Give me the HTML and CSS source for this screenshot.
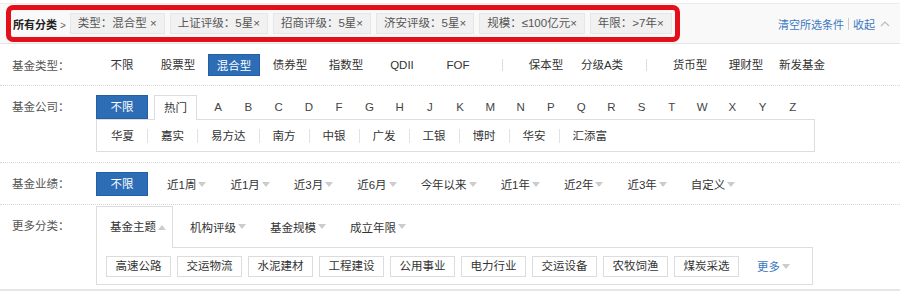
FILE: index.html
```html
<!DOCTYPE html>
<html lang="zh-CN">
<head>
    <meta charset="UTF-8">
    <title>基金筛选</title>
    <link rel="stylesheet" href="styles.css">
</head>
<body>
    <div class="crumbs">
        <div class="picked">
            <span class="all">所有分类<em>&gt;</em></span>
            <span class="tag">类型：混合型 ×</span>
            <span class="tag">上证评级：5星×</span>
            <span class="tag">招商评级：5星×</span>
            <span class="tag">济安评级：5星×</span>
            <span class="tag">规模：≤100亿元×</span>
            <span class="tag">年限：&gt;7年×</span>
        </div>
        <div class="ops">
            <a class="link">清空所选条件</a>
            <span class="vbar"></span>
            <a class="link">收起</a>
            <svg class="up" width="10" height="7" viewBox="0 0 10 7"><path d="M1 6 L5 2 L9 6" fill="none" stroke="#bbb" stroke-width="1.2"/></svg>
        </div>
    </div>

    <div class="row row-type">
        <div class="label">基金类型：</div>
        <div class="opts">
            <span class="opt">不限</span>
            <span class="opt">股票型</span>
            <span class="opt on">混合型</span>
            <span class="opt">债券型</span>
            <span class="opt">指数型</span>
            <span class="opt">QDII</span>
            <span class="opt">FOF</span>
            <span class="sep"></span>
            <span class="opt">保本型</span>
            <span class="opt">分级A类</span>
            <span class="sep"></span>
            <span class="opt">货币型</span>
            <span class="opt">理财型</span>
            <span class="opt">新发基金</span>
        </div>
    </div>

    <div class="row row-company">
        <div class="label">基金公司：</div>
        <div class="body">
            <div class="tabs">
                <span class="btn-on">不限</span>
                <span class="tab active">热门</span>
                <span class="letter">A</span>
                <span class="letter">B</span>
                <span class="letter">C</span>
                <span class="letter">D</span>
                <span class="letter">F</span>
                <span class="letter">G</span>
                <span class="letter">H</span>
                <span class="letter">J</span>
                <span class="letter">K</span>
                <span class="letter">M</span>
                <span class="letter">N</span>
                <span class="letter">P</span>
                <span class="letter">Q</span>
                <span class="letter">R</span>
                <span class="letter">S</span>
                <span class="letter">T</span>
                <span class="letter">W</span>
                <span class="letter">X</span>
                <span class="letter">Y</span>
                <span class="letter">Z</span>
            </div>
            <div class="panel companies">
                <span class="co">华夏</span>
                <span class="co">嘉实</span>
                <span class="co">易方达</span>
                <span class="co">南方</span>
                <span class="co">中银</span>
                <span class="co">广发</span>
                <span class="co">工银</span>
                <span class="co">博时</span>
                <span class="co">华安</span>
                <span class="co">汇添富</span>
            </div>
        </div>
    </div>

    <div class="row row-perf">
        <div class="label">基金业绩：</div>
        <div class="perf">
            <span class="btn-on">不限</span>
            <span class="drop">近1周<i class="tri"></i></span>
            <span class="drop">近1月<i class="tri"></i></span>
            <span class="drop">近3月<i class="tri"></i></span>
            <span class="drop">近6月<i class="tri"></i></span>
            <span class="drop">今年以来<i class="tri"></i></span>
            <span class="drop">近1年<i class="tri"></i></span>
            <span class="drop">近2年<i class="tri"></i></span>
            <span class="drop">近3年<i class="tri"></i></span>
            <span class="drop">自定义<i class="tri"></i></span>
        </div>
    </div>

    <div class="row row-more">
        <div class="label">更多分类：</div>
        <div class="body">
            <div class="tabs more-tabs">
                <span class="tab active big">基金主题<i class="tri up-tri"></i></span>
                <span class="drop">机构评级<i class="tri"></i></span>
                <span class="drop">基金规模<i class="tri"></i></span>
                <span class="drop">成立年限<i class="tri"></i></span>
            </div>
            <div class="panel themes">
                <span class="theme">高速公路</span>
                <span class="theme">交运物流</span>
                <span class="theme">水泥建材</span>
                <span class="theme">工程建设</span>
                <span class="theme">公用事业</span>
                <span class="theme">电力行业</span>
                <span class="theme">交运设备</span>
                <span class="theme">农牧饲渔</span>
                <span class="theme">煤炭采选</span>
                <span class="link more">更多<i class="tri"></i></span>
            </div>
        </div>
    </div>
</body>
</html>
```

FILE: styles.css
```css
body {
    margin: 0;
    background: #fff;
    font-family: "Liberation Sans", "Noto Sans CJK SC", sans-serif;
    font-size: 11.5px;
    color: #333;
    width: 900px;
    white-space: nowrap;
}
.crumbs {
    margin-top: 3px;
    height: 39px;
    background: #f9f9f9;
    border-top: 1px solid #ececec;
    border-bottom: 1px solid #e4e4e4;
    display: flex;
    align-items: flex-start;
    justify-content: space-between;
}
.picked {
    margin: 1px 0 0 6px;
    width: 674px;
    height: 37px;
    box-sizing: border-box;
    border: 5px solid #e3101b;
    border-radius: 7px;
    display: flex;
    align-items: center;
    padding-left: 2px;
    margin-bottom: -2px;
    flex-shrink: 0;
}
.all {
    font-weight: bold;
    font-size: 11px;
    color: #222;
    margin-right: 4px;
}
.all em {
    font-style: normal;
    font-weight: normal;
    font-size: 10px;
    color: #666;
    margin-left: 3px;
}
.tag {
    background: #f1f1f1;
    border: 1px solid #e6e6e6;
    color: #555;
    height: 19px;
    line-height: 19px;
    padding: 0 7px;
    margin-right: 5px;
    flex-shrink: 0;
}
.ops {
    display: flex;
    align-items: center;
    height: 39px;
    padding-right: 10px;
    font-size: 11px;
}
.link {
    color: #3a78c2;
}
.vbar {
    width: 1px;
    height: 12px;
    background: #ccc;
    margin: 0 4px;
}
.up {
    margin-left: 5px;
}
.row {
    display: flex;
    border-bottom: 1px dotted #d8d8d8;
}
.label {
    width: 84px;
    padding-left: 12px;
    color: #555;
    flex-shrink: 0;
}
.row-type {
    height: 41px;
    align-items: center;
}
.opts {
    display: flex;
    align-items: center;
    margin-left: -2px;
}
.opt {
    width: 52px;
    margin: 0 2px;
    height: 22px;
    line-height: 22px;
    text-align: center;
}
.opt.on, .btn-on {
    background: #2c6db6;
    border: 1px solid #245fa3;
    color: #fff;
    box-sizing: border-box;
}
.sep {
    width: 32px;
    display: flex;
    justify-content: center;
}
.sep::before {
    content: "";
    width: 1px;
    height: 12px;
    background: #ddd;
}
.row-company {
    padding: 9px 0 10px;
}
.row-company .label {
    line-height: 24px;
}
.body {
    width: 719px;
}
.tabs {
    display: flex;
    align-items: center;
    height: 24px;
}
.btn-on {
    width: 52px;
    height: 24px;
    line-height: 22px;
    text-align: center;
    margin-right: 6px;
}
.tab {
    height: 24px;
    line-height: 24px;
    padding: 0 9px;
    box-sizing: border-box;
}
.tab.active {
    background: #fff;
    border: 1px solid #ddd;
    border-bottom: none;
    position: relative;
    z-index: 1;
    margin-bottom: -1px;
    height: 25px;
    align-self: flex-start;
}
.letter {
    width: 30.25px;
    text-align: center;
    color: #444;
}
.tabs .tab.active + .letter {
    margin-left: 6px;
}
.panel {
    border: 1px solid #ddd;
    display: flex;
    align-items: center;
}
.companies {
    height: 33px;
    box-sizing: border-box;
    padding-left: 1px;
}
.co {
    padding: 0 13px;
    line-height: 14px;
    border-left: 1px solid #e2e2e2;
}
.co:first-child {
    border-left: none;
}
.row-perf {
    padding-top: 9px;
    box-sizing: border-box;
    height: 42px;
    align-items: flex-start;
}
.row-perf .label {
    line-height: 24px;
}
.perf {
    display: flex;
    align-items: center;
    height: 24px;
}
.perf .btn-on {
    margin-right: 19px;
}
.drop {
    margin-right: 24px;
    display: flex;
    align-items: center;
}
.tri {
    display: inline-block;
    width: 0;
    height: 0;
    border-left: 4px solid transparent;
    border-right: 4px solid transparent;
    border-top: 5px solid #ccc;
    margin-left: 2px;
}
.up-tri {
    border-top: none;
    border-bottom: 5px solid #ccc;
}
.row-more {
    padding-bottom: 4px;
    border-bottom: 2px solid #e6e6e6;
    margin-top: 1px;
}
.row-more .label {
    line-height: 41px;
}
.more-tabs {
    height: 41px;
}
.tab.big {
    height: 42px;
    line-height: 41px;
    padding: 0 6px 0 13px;
    display: flex;
    align-items: center;
    margin-right: 17px;
}
.themes {
    height: 38px;
    box-sizing: border-box;
    width: 717px;
    padding-left: 9px;
}
.theme {
    width: 65px;
    height: 21px;
    line-height: 19px;
    text-align: center;
    box-sizing: border-box;
    border: 1px solid #dcdcdc;
    margin-right: 6px;
}
.more {
    margin-left: 12px;
    display: flex;
    align-items: center;
}
```
